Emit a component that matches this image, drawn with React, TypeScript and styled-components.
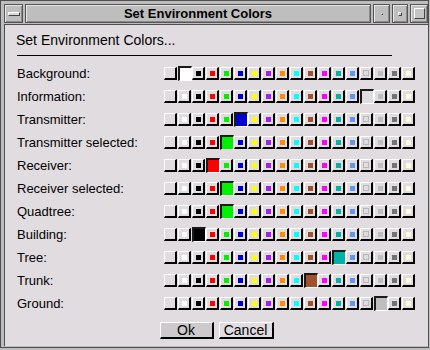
import React from "react";
import styled, { createGlobalStyle, css } from "styled-components";

const Global = createGlobalStyle`
	html, body {
		margin: 0;
		padding: 0;
		background: #bdbdbd;
	}
	* {
		box-sizing: border-box;
	}
`;

const Frame = styled.div`
	width: 429px;
	height: 348px;
	display: flex;
	flex-direction: column;
	background: #bdbdbd;
	border: 1px solid #4e4e4e;
	padding: 3px 0 1px 3px;
	font-family: "Liberation Sans", Arial, sans-serif;
`;

const TitleBar = styled.div`
	display: flex;
	gap: 2px;
	height: 19px;
	flex: none;
`;

const TitleCell = styled.div<{ $w?: number }>`
	${({ $w }) => ($w ? css`width: ${$w}px; flex: none;` : css`flex: 1;`)}
	display: flex;
	align-items: center;
	justify-content: center;
	background: #bebebe;
	border: 1px solid #555;
	box-shadow: inset 1px 1px 0 #e6e6e6, inset -1px -1px 0 #8a8a8a;
	font-weight: bold;
	font-size: 13px;
	color: #000;
`;

const MenuBar = styled.div`
	width: 12px;
	height: 4px;
	background: #d8d8d8;
	border-top: 1px solid #fff;
	border-left: 1px solid #fff;
	border-bottom: 1px solid #444;
	border-right: 1px solid #444;
`;

const Box = styled.div<{ $s: number }>`
	width: ${({ $s }) => $s}px;
	height: ${({ $s }) => $s}px;
	border-top: 1px solid #fff;
	border-left: 1px solid #fff;
	border-bottom: 1px solid #444;
	border-right: 1px solid #444;
	background: #c4c4c4;
`;

const Body = styled.div`
	flex: 1;
	margin-top: 1px;
	background: #e0dce0;
	border: 1px solid #4e4e4e;
	border-right: none;
	border-bottom: none;
	padding: 6px 0 0 12px;
	display: flex;
	flex-direction: column;
`;

const Heading = styled.div`
	font-size: 14px;
	line-height: 18px;
	color: #000;
	margin-left: -1px;
`;

const Rule = styled.div`
	margin: 6px 0 6px 0;
	width: 375px;
	height: 1px;
	background: #000;
`;

const Row = styled.div`
	display: flex;
	align-items: center;
	height: 23px;
`;

const Label = styled.div`
	width: 147px;
	font-size: 13px;
	color: #000;
	white-space: nowrap;
`;

const Swatches = styled.div`
	display: flex;
	align-items: center;
`;

const Swatch = styled.div<{ $sel: boolean; $fill: string }>`
	flex: none;
	display: flex;
	align-items: center;
	justify-content: center;
	${({ $sel, $fill }) =>
		$sel
			? css`
					width: 14px;
					height: 15px;
					background: ${$fill};
					border-top: 2px solid #1a1a1a;
					border-left: 2px solid #1a1a1a;
					border-bottom: 1px solid #fff;
					border-right: 1px solid #fff;
			  `
			: css`
					width: 13px;
					height: 13px;
					margin-right: 1px;
					background: #e0dce0;
					border-top: 1px solid #fff;
					border-left: 1px solid #fff;
					border-bottom: 2px solid #000;
					border-right: 2px solid #000;
			  `}
`;

const Chip = styled.div<{ $c: string }>`
	width: 5px;
	height: 5px;
	background: ${({ $c }) => $c};
`;

const Hollow = styled.div`
	width: 6px;
	height: 6px;
	border: 1px solid #b8b8b8;
`;

const Actions = styled.div`
	display: flex;
	justify-content: center;
	gap: 5px;
	margin-top: 7px;
	padding-right: 12px;
`;

const Button = styled.button<{ $default?: boolean }>`
	height: 17px;
	width: ${({ $default }) => ($default ? 54 : 55)}px;
	padding: 0;
	font-family: "Liberation Sans", Arial, sans-serif;
	font-size: 14px;
	line-height: 14px;
	color: #000;
	background: ${({ $default }) => ($default ? "#cdc9cd" : "#e0dce0")};
	border-top: 1px solid #fff;
	border-left: 1px solid #fff;
	border-bottom: 2px solid #000;
	border-right: 2px solid #000;
`;

const COLORS = [
	"",
	"#ffffff",
	"#000000",
	"#ff0000",
	"#00f000",
	"#0000cd",
	"#ffff00",
	"#a020f0",
	"#ff8c00",
	"#00ffff",
	"#a0522d",
	"#ff00ff",
	"#00b2a6",
	"#6495ed",
	"hollow",
	"#bebebe",
	"#737373",
	"#ffffe0",
];

const ROWS: [string, number][] = [
	["Background:", 1],
	["Information:", 14],
	["Transmitter:", 5],
	["Transmitter selected:", 4],
	["Receiver:", 3],
	["Receiver selected:", 4],
	["Quadtree:", 4],
	["Building:", 2],
	["Tree:", 12],
	["Trunk:", 10],
	["Ground:", 15],
];

const fillOf = (c: string) => (c === "" || c === "hollow" ? "#e0dce0" : c);

export default function App() {
	return (
		<>
			<Global />
			<Frame>
				<TitleBar>
					<TitleCell $w={19}>
						<MenuBar />
					</TitleCell>
					<TitleCell>Set Environment Colors</TitleCell>
					<TitleCell $w={17}>
						<Box $s={2} />
					</TitleCell>
					<TitleCell $w={16}>
						<Box $s={4} />
					</TitleCell>
					<TitleCell $w={18}>
						<Box $s={11} />
					</TitleCell>
				</TitleBar>
				<Body>
					<Heading>Set Environment Colors...</Heading>
					<Rule />
					{ROWS.map(([label, sel]) => (
						<Row key={label}>
							<Label>{label}</Label>
							<Swatches>
								{COLORS.map((c, i) => (
									<Swatch key={i} $sel={i === sel} $fill={fillOf(c)}>
										{i !== sel && c === "hollow" && <Hollow />}
										{i !== sel && c !== "" && c !== "hollow" && <Chip $c={c} />}
									</Swatch>
								))}
							</Swatches>
						</Row>
					))}
					<Actions>
						<Button $default>Ok</Button>
						<Button>Cancel</Button>
					</Actions>
				</Body>
			</Frame>
		</>
	);
}
